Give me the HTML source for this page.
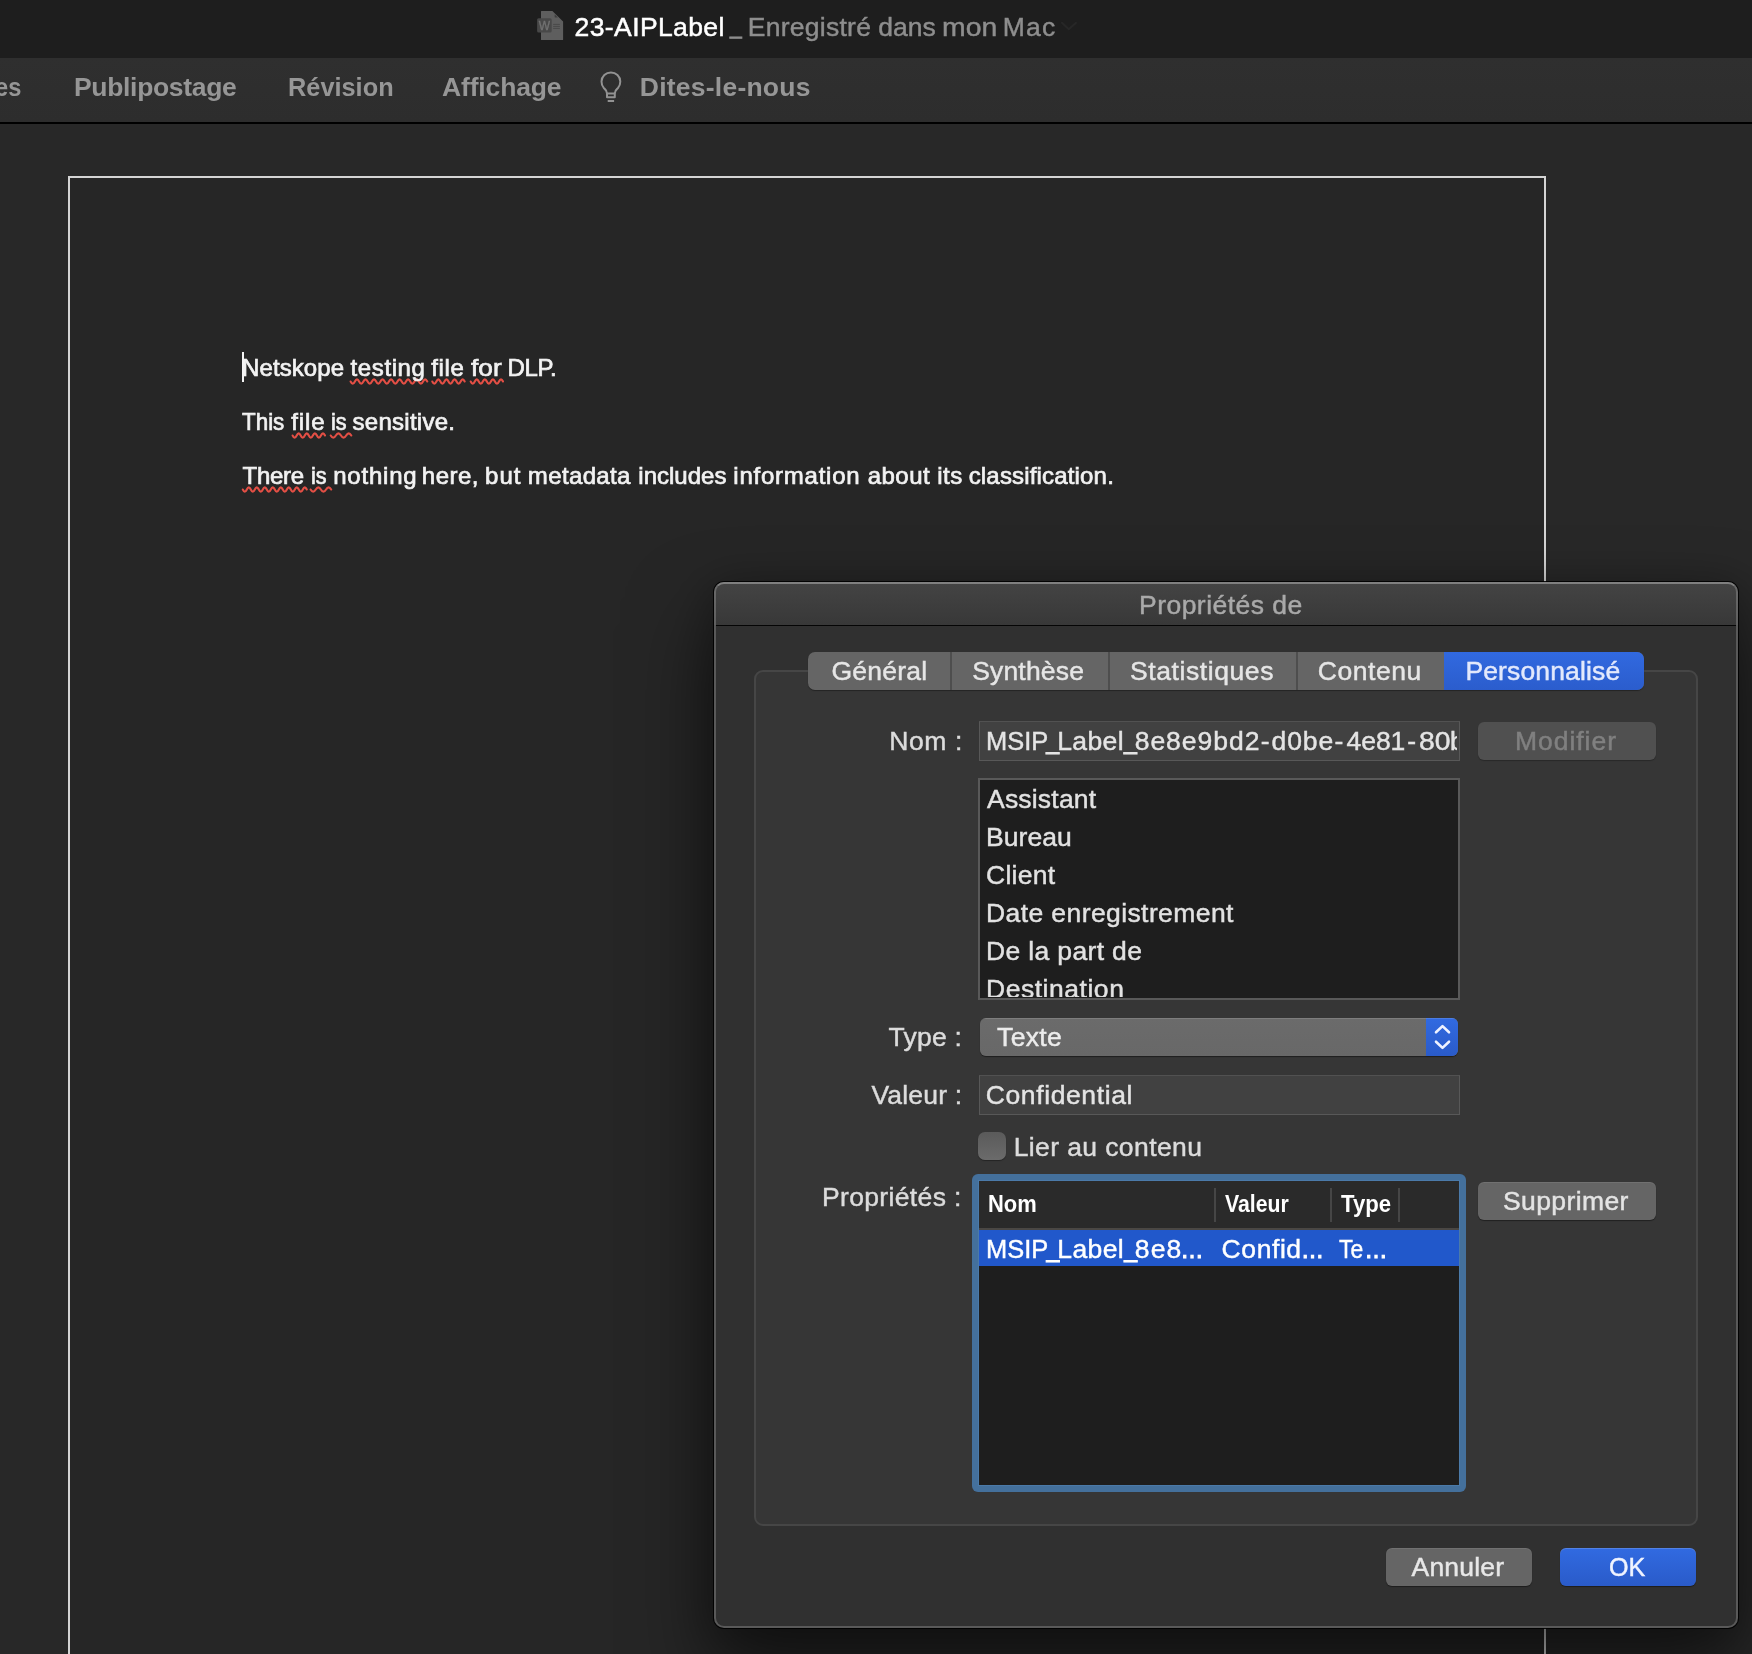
<!DOCTYPE html>
<html lang="fr">
<head>
<meta charset="utf-8">
<title>23-AIPLabel</title>
<style>
html,body{margin:0;padding:0}
body{width:1752px;height:1654px;overflow:hidden;position:relative;background:#282828;font-family:"Liberation Sans",sans-serif}
.abs,.t,div{position:absolute;box-sizing:border-box}
.t{white-space:pre;line-height:1}
#titlebar{left:0;top:0;width:1752px;height:58px;background:#1e1e1e}
#ribbon{left:0;top:58px;width:1752px;height:64px;background:linear-gradient(#2f2f2f,#2d2d2d)}
#ribbonline{left:0;top:122px;width:1752px;height:2px;background:#000}
#page{left:68px;top:176px;width:1478px;height:1500px;background:#262626;border:2px solid #d4d4d4}
#caret{left:242px;top:352px;width:2px;height:30px;background:#f4f4f4}
#dlg{left:714px;top:582px;width:1024px;height:1046px;border-radius:10px;background:#303030;
 box-shadow:0 0 0 1px rgba(0,0,0,.9),0 44px 80px 6px rgba(0,0,0,.5),0 4px 40px 4px rgba(0,0,0,.22)}
#dlgtitle{left:0;top:0;width:1024px;height:43px;border-radius:10px 10px 0 0;background:linear-gradient(#444444,#383838)}
#dlgline{left:2px;top:43px;width:1020px;height:1px;background:#050505}
#dlgedge{left:0;top:0;width:1024px;height:1046px;border-radius:10px;border:2px solid rgba(255,255,255,.2);border-top-color:rgba(255,255,255,.32)}
#group{left:754px;top:670px;width:944px;height:856px;border-radius:9px;background:#363636;border:2px solid #464646}
#tabs{left:808px;top:652px;width:836px;height:38px;border-radius:7px;background:#656565;overflow:hidden;box-shadow:0 1px 1px rgba(0,0,0,.35)}
.sep{top:0;width:2px;height:38px;background:#4e4e4e}
#tabsel{left:636px;top:0;width:200px;height:38px;background:linear-gradient(#3169e0,#2b5dcd)}
.field{background:#414141;border:1px solid #585858;border-top-color:#515151}
#nom{left:979px;top:721px;width:481px;height:40px}
#valeur{left:979px;top:1075px;width:481px;height:40px}
#list{left:978px;top:778px;width:482px;height:222px;background:#1e1e1e;border:2px solid #595959}
.btn{border-radius:6px;background:#656565;box-shadow:0 1px 1px rgba(0,0,0,.4),inset 0 1px 0 rgba(255,255,255,.08)}
#modifier{left:1478px;top:722px;width:178px;height:38px;background:#505050;box-shadow:0 1px 1px rgba(0,0,0,.25)}
#supprimer{left:1478px;top:1182px;width:178px;height:38px}
#annuler{left:1386px;top:1548px;width:146px;height:38px}
#ok{left:1560px;top:1548px;width:136px;height:38px;background:linear-gradient(#316ae1,#2a5bc9);box-shadow:0 1px 1px rgba(0,0,0,.4),inset 0 1px 0 rgba(255,255,255,.16)}
#popup{left:980px;top:1018px;width:478px;height:38px;border-radius:6px;background:linear-gradient(#6b6b6b,#686868);overflow:hidden;box-shadow:0 1px 1px rgba(0,0,0,.45)}
#pophl{left:0;top:0;width:478px;height:1px;background:rgba(255,255,255,.13)}
#popblue{left:446px;top:0;width:32px;height:38px;background:linear-gradient(#316ae1,#2a5bc9)}
#check{left:978px;top:1132px;width:28px;height:28px;border-radius:7px;background:linear-gradient(#5a5a5a,#6b6b6b);box-shadow:0 1px 1px rgba(0,0,0,.35)}
#focus{left:972px;top:1174px;width:494px;height:318px;border-radius:6px;background:#44709c}
#table{left:979px;top:1181px;width:480px;height:304px;background:#1e1e1e;box-shadow:0 0 0 1px rgba(90,140,195,.35)}
#thead{left:0;top:0;width:480px;height:47px;background:#2a2a2a}
#theadline{left:0;top:47px;width:480px;height:2px;background:#4a4744}
.hsep{top:7px;width:2px;height:34px;background:#464646}
#rowsel{left:0;top:49px;width:480px;height:36px;background:#2158cb}
#txt{left:0;top:0;width:1752px;height:1654px;will-change:transform}
#clipnom{will-change:transform;left:0;top:0;width:1752px;height:1654px;clip-path:inset(722px 295.5px 894px 980px)}
#cliplist{will-change:transform;left:0;top:0;width:1752px;height:1654px;clip-path:inset(780px 294px 657px 980px)}
</style>
</head>
<body>
<div id="titlebar"></div>
<div id="ribbon"></div>
<div id="ribbonline"></div>
<!-- document icon -->
<svg class="abs" style="left:536px;top:10px;will-change:transform" width="28" height="31" viewBox="0 0 28 31">
 <path d="M5.500 0.900h10.900l10.700 10.700v17.800a0.500 0.500 0 0 1-0.500 0.500h-21.100a0.500 0.500 0 0 1-0.500-0.500v-28a0.500 0.500 0 0 1 0.500-0.500z" fill="#5e5e5e"/>
 <path d="M18.700 4.300l3.200 3.200h-2.600a0.600 0.600 0 0 1-0.600-0.600z" fill="#3e3e3e"/>
 <rect x="1.100" y="8.200" width="14.600" height="14.400" rx="1.600" fill="#484848"/>
 <path d="M17.100 14.400h6.800M17.100 16.400h6.800M17.100 18.400h6.800" stroke="#494949" stroke-width="1"/>
 <text x="8.400" y="19.800" font-family="Liberation Sans,sans-serif" font-size="12" font-weight="400" fill="#727272" stroke="#727272" stroke-width="0.300" text-anchor="middle">W</text>
</svg>
<!-- title chevron -->
<svg class="abs" style="left:1060px;top:21px" width="18" height="10" viewBox="0 0 18 10" fill="none" stroke="#272727" stroke-width="2" stroke-linecap="round" stroke-linejoin="round"><path d="M2 1.800l6.800 6.400l7.200-6.400"/></svg>
<!-- bulb -->
<svg class="abs" style="left:598px;top:70px" width="26" height="34" viewBox="0 0 26 34" fill="none" stroke="#929292" stroke-width="2" stroke-linejoin="round">
 <path d="M9 23.500c0-3-1.300-3.800-3-5.300a9.400 9.400 0 1 1 13.800 0c-1.700 1.500-3 2.300-3 5.300"/>
 <rect x="9" y="23.500" width="7.800" height="3.800"/>
 <path d="M9.700 31h6.400"/>
</svg>
<div id="page"></div>
<div id="caret"></div>
<svg class="abs" style="left:0;top:0" width="1752" height="600" fill="none" stroke="#e34f45" stroke-width="2.1" stroke-linecap="round"><path d="M350.6 381.5 q2.13 4.32 4.26 0 t4.26 0 q2.13 4.32 4.26 0 t4.26 0 q2.13 4.32 4.26 0 t4.26 0 q2.13 4.32 4.26 0 t4.26 0 q2.13 4.32 4.26 0 t4.26 0 q2.13 4.32 4.26 0 t4.26 0 q2.13 4.32 4.26 0 t4.26 0 q2.13 4.32 4.26 0 t4.26 0 q2.13 4.32 4.26 0 t4.26 0"/><path d="M432.3 381.5 q2.02 4.32 4.05 0 t4.05 0 q2.02 4.32 4.05 0 t4.05 0 q2.02 4.32 4.05 0 t4.05 0 q2.02 4.32 4.05 0 t4.05 0"/><path d="M470.7 381.5 q2.02 4.32 4.04 0 t4.04 0 q2.02 4.32 4.04 0 t4.04 0 q2.02 4.32 4.04 0 t4.04 0 q2.02 4.32 4.04 0 t4.04 0"/><path d="M292.6 435.5 q2.02 4.32 4.05 0 t4.05 0 q2.02 4.32 4.05 0 t4.05 0 q2.02 4.32 4.05 0 t4.05 0 q2.02 4.32 4.05 0 t4.05 0"/><path d="M330.7 435.5 q2.58 4.32 5.15 0 t5.15 0 q2.58 4.32 5.15 0 t5.15 0"/><path d="M242.8 489.5 q2.00 4.32 4.00 0 t4.00 0 q2.00 4.32 4.00 0 t4.00 0 q2.00 4.32 4.00 0 t4.00 0 q2.00 4.32 4.00 0 t4.00 0 q2.00 4.32 4.00 0 t4.00 0 q2.00 4.32 4.00 0 t4.00 0 q2.00 4.32 4.00 0 t4.00 0 q2.00 4.32 4.00 0 t4.00 0"/><path d="M310.6 489.5 q2.57 4.32 5.15 0 t5.15 0 q2.57 4.32 5.15 0 t5.15 0"/></svg>
<div id="dlg">
 <div id="dlgtitle"></div>
 <div id="dlgline"></div>
 <div id="dlgedge"></div>
</div>
<div id="group"></div>
<div id="tabs">
 <div class="sep" style="left:142px"></div>
 <div class="sep" style="left:300px"></div>
 <div class="sep" style="left:488px"></div>
 <div id="tabsel"></div>
</div>
<div id="nom" class="field"></div>
<div id="list"></div>
<div id="modifier" class="btn"></div>
<div id="popup"><div id="popblue"></div><div id="pophl"></div>
 <svg class="abs" style="left:446px;top:0" width="32" height="38" viewBox="0 0 32 38" fill="none" stroke="#eef2ff" stroke-width="2.600" stroke-linecap="round" stroke-linejoin="round"><path d="M10 14.300l6.500-6.200l6.500 6.200M10 23.700l6.500 6.200l6.500-6.200"/></svg>
</div>
<div id="valeur" class="field"></div>
<div id="check"></div>
<div id="focus"></div>
<div id="table">
 <div id="thead"></div>
 <div id="theadline"></div>
 <div class="hsep" style="left:235px"></div>
 <div class="hsep" style="left:351px"></div>
 <div class="hsep" style="left:419px"></div>
 <div id="rowsel"></div>
</div>
<div id="supprimer" class="btn"></div>
<div id="annuler" class="btn"></div>
<div id="ok" class="btn"></div>
<div id="clipnom">
<span class="t" style="left:985.58px;top:728.00px;font-size:26.5px;color:#e4e4e4;letter-spacing:0.000px;-webkit-text-stroke:0.45px #e4e4e4;transform:scaleX(0.9597);transform-origin:0 0">MSIP</span><span class="t" style="left:1046.30px;top:730.00px;font-size:23px;color:#e4e4e4;letter-spacing:0.000px;-webkit-text-stroke:0.9px #e4e4e4">_</span><span class="t" style="left:1057.20px;top:728.00px;font-size:26.5px;color:#e4e4e4;letter-spacing:0.375px;-webkit-text-stroke:0.45px #e4e4e4">Label</span><span class="t" style="left:1124.10px;top:730.00px;font-size:23px;color:#e4e4e4;letter-spacing:0.000px;-webkit-text-stroke:0.9px #e4e4e4">_</span><span class="t" style="left:1134.70px;top:728.00px;font-size:26.5px;color:#e4e4e4;letter-spacing:0.971px;-webkit-text-stroke:0.45px #e4e4e4">8e8e9bd2</span><span class="t" style="left:1260.80px;top:728.00px;font-size:26.5px;color:#e4e4e4;letter-spacing:0.000px;-webkit-text-stroke:0.45px #e4e4e4">-</span><span class="t" style="left:1271.50px;top:728.00px;font-size:26.5px;color:#e4e4e4;letter-spacing:0.933px;-webkit-text-stroke:0.45px #e4e4e4">d0be</span><span class="t" style="left:1334.60px;top:728.00px;font-size:26.5px;color:#e4e4e4;letter-spacing:0.000px;-webkit-text-stroke:0.45px #e4e4e4">-</span><span class="t" style="left:1346.60px;top:728.00px;font-size:26.5px;color:#e4e4e4;letter-spacing:-0.067px;-webkit-text-stroke:0.45px #e4e4e4">4e81</span><span class="t" style="left:1407.30px;top:728.00px;font-size:26.5px;color:#e4e4e4;letter-spacing:0.000px;-webkit-text-stroke:0.45px #e4e4e4">-</span><span class="t" style="left:1418.53px;top:728.00px;font-size:26.5px;color:#e4e4e4;letter-spacing:0.000px;-webkit-text-stroke:0.45px #e4e4e4;transform:scaleX(1.0679);transform-origin:0 0">80</span><span class="t" style="left:1450.00px;top:728.00px;font-size:26.5px;color:#e4e4e4;letter-spacing:0.000px;-webkit-text-stroke:0.45px #e4e4e4">b</span>
</div>
<div id="cliplist">
<span class="t" style="left:987.00px;top:786.00px;font-size:26.5px;color:#e2e2e2;letter-spacing:0.200px;-webkit-text-stroke:0.45px #e2e2e2">Assistant</span>
<span class="t" style="left:986.00px;top:824.00px;font-size:26.5px;color:#e2e2e2;letter-spacing:0.060px;-webkit-text-stroke:0.45px #e2e2e2">Bureau</span>
<span class="t" style="left:986.00px;top:862.00px;font-size:26.5px;color:#e2e2e2;letter-spacing:0.280px;-webkit-text-stroke:0.45px #e2e2e2">Client</span>
<span class="t" style="left:986.00px;top:900.00px;font-size:26.5px;color:#e2e2e2;letter-spacing:0.406px;-webkit-text-stroke:0.45px #e2e2e2">Date enregistrement</span>
<span class="t" style="left:986.00px;top:938.00px;font-size:26.5px;color:#e2e2e2;letter-spacing:0.350px;-webkit-text-stroke:0.45px #e2e2e2">De la part de</span>
<span class="t" style="left:986.00px;top:976.00px;font-size:26.5px;color:#e2e2e2;letter-spacing:0.530px;-webkit-text-stroke:0.45px #e2e2e2">Destination</span>

</div>
<div id="txt">
<span class="t" style="left:574.60px;top:14.00px;font-size:26.5px;color:#ffffff;letter-spacing:0.390px;-webkit-text-stroke:0.5px #ffffff">23-AIPLabel</span> <span class="t" style="left:730.00px;top:16.00px;font-size:21px;color:#8e8e8e;letter-spacing:0.000px;-webkit-text-stroke:0.8px #8e8e8e">_</span> <span class="t" style="left:747.80px;top:14.00px;font-size:26.5px;color:#8e8e8e;letter-spacing:0.256px;-webkit-text-stroke:0.45px #8e8e8e">Enregistré</span> <span class="t" style="left:878.20px;top:14.00px;font-size:26.5px;color:#8e8e8e;letter-spacing:0.000px;-webkit-text-stroke:0.45px #8e8e8e">dans</span> <span class="t" style="left:942.16px;top:14.00px;font-size:26.5px;color:#8e8e8e;letter-spacing:0.000px;-webkit-text-stroke:0.45px #8e8e8e;transform:scaleX(1.0708);transform-origin:0 0">mon</span> <span class="t" style="left:1002.80px;top:14.00px;font-size:26.5px;color:#8e8e8e;letter-spacing:1.250px;-webkit-text-stroke:0.45px #8e8e8e">Mac</span>
<span class="t" style="left:-4.89px;top:74.00px;font-size:26.5px;color:#969696;letter-spacing:0.000px;font-weight:700;transform:scaleX(0.8929);transform-origin:0 0">es</span>
<span class="t" style="left:74.00px;top:74.00px;font-size:26.5px;color:#969696;letter-spacing:-0.327px;font-weight:700">Publipostage</span>
<span class="t" style="left:288.09px;top:74.00px;font-size:26.5px;color:#969696;letter-spacing:0.000px;font-weight:700;transform:scaleX(0.9561);transform-origin:0 0">Révision</span>
<span class="t" style="left:442.00px;top:74.00px;font-size:26.5px;color:#969696;letter-spacing:-0.150px;font-weight:700">Affichage</span>
<span class="t" style="left:639.80px;top:74.00px;font-size:26.5px;color:#969696;letter-spacing:0.233px;font-weight:700">Dites-le-nous</span>
<span class="t" style="left:242.00px;top:356.00px;font-size:24px;color:#f2f2f2;letter-spacing:0.100px;-webkit-text-stroke:0.7px #f2f2f2">Netskope</span> <span class="t" style="left:350.60px;top:356.00px;font-size:24px;color:#f2f2f2;letter-spacing:0.600px;-webkit-text-stroke:0.7px #f2f2f2">testing</span> <span class="t" style="left:431.20px;top:356.00px;font-size:24px;color:#f2f2f2;letter-spacing:0.667px;-webkit-text-stroke:0.7px #f2f2f2">file</span> <span class="t" style="left:470.70px;top:356.00px;font-size:24px;color:#f2f2f2;letter-spacing:0.000px;-webkit-text-stroke:0.7px #f2f2f2;transform:scaleX(1.0929);transform-origin:0 0">for</span> <span class="t" style="left:507.50px;top:356.00px;font-size:24px;color:#f2f2f2;letter-spacing:-0.333px;-webkit-text-stroke:0.7px #f2f2f2">DLP.</span>
<span class="t" style="left:242.40px;top:410.00px;font-size:24px;color:#f2f2f2;letter-spacing:0.000px;-webkit-text-stroke:0.7px #f2f2f2;transform:scaleX(0.9333);transform-origin:0 0">This</span> <span class="t" style="left:291.20px;top:410.00px;font-size:24px;color:#f2f2f2;letter-spacing:0.900px;-webkit-text-stroke:0.7px #f2f2f2">file</span> <span class="t" style="left:331.00px;top:410.00px;font-size:24px;color:#f2f2f2;letter-spacing:0.000px;-webkit-text-stroke:0.7px #f2f2f2;transform:scaleX(0.9000);transform-origin:0 0">is</span> <span class="t" style="left:352.60px;top:410.00px;font-size:24px;color:#f2f2f2;letter-spacing:0.256px;-webkit-text-stroke:0.7px #f2f2f2">sensitive.</span>
<span class="t" style="left:242.60px;top:464.00px;font-size:24px;color:#f2f2f2;letter-spacing:-0.275px;-webkit-text-stroke:0.7px #f2f2f2">There</span> <span class="t" style="left:310.50px;top:464.00px;font-size:24px;color:#f2f2f2;letter-spacing:0.000px;-webkit-text-stroke:0.7px #f2f2f2;transform:scaleX(0.9000);transform-origin:0 0">is</span> <span class="t" style="left:333.20px;top:464.00px;font-size:24px;color:#f2f2f2;letter-spacing:0.783px;-webkit-text-stroke:0.7px #f2f2f2">nothing</span> <span class="t" style="left:421.80px;top:464.00px;font-size:24px;color:#f2f2f2;letter-spacing:0.500px;-webkit-text-stroke:0.7px #f2f2f2">here,</span> <span class="t" style="left:485.00px;top:464.00px;font-size:24px;color:#f2f2f2;letter-spacing:1.050px;-webkit-text-stroke:0.7px #f2f2f2">but</span> <span class="t" style="left:527.80px;top:464.00px;font-size:24px;color:#f2f2f2;letter-spacing:0.371px;-webkit-text-stroke:0.7px #f2f2f2">metadata</span> <span class="t" style="left:638.30px;top:464.00px;font-size:24px;color:#f2f2f2;letter-spacing:0.014px;-webkit-text-stroke:0.7px #f2f2f2">includes</span> <span class="t" style="left:733.30px;top:464.00px;font-size:24px;color:#f2f2f2;letter-spacing:0.760px;-webkit-text-stroke:0.7px #f2f2f2">information</span> <span class="t" style="left:867.70px;top:464.00px;font-size:24px;color:#f2f2f2;letter-spacing:0.475px;-webkit-text-stroke:0.7px #f2f2f2">about</span> <span class="t" style="left:937.20px;top:464.00px;font-size:24px;color:#f2f2f2;letter-spacing:0.550px;-webkit-text-stroke:0.7px #f2f2f2">its</span> <span class="t" style="left:968.70px;top:464.00px;font-size:24px;color:#f2f2f2;letter-spacing:0.171px;-webkit-text-stroke:0.7px #f2f2f2">classification.</span>
<span class="t" style="left:1139.00px;top:592.00px;font-size:26.5px;color:#a9a9a9;letter-spacing:0.467px;-webkit-text-stroke:0.45px #a9a9a9">Propriétés de</span>
<span class="t" style="left:831.50px;top:658.00px;font-size:26.5px;color:#e6e6e6;letter-spacing:0.217px;-webkit-text-stroke:0.45px #e6e6e6">Général</span>
<span class="t" style="left:972.20px;top:658.00px;font-size:26.5px;color:#e6e6e6;letter-spacing:0.171px;-webkit-text-stroke:0.45px #e6e6e6">Synthèse</span>
<span class="t" style="left:1130.00px;top:658.00px;font-size:26.5px;color:#e6e6e6;letter-spacing:0.582px;-webkit-text-stroke:0.45px #e6e6e6">Statistiques</span>
<span class="t" style="left:1317.80px;top:658.00px;font-size:26.5px;color:#e6e6e6;letter-spacing:0.533px;-webkit-text-stroke:0.45px #e6e6e6">Contenu</span>
<span class="t" style="left:1465.40px;top:658.00px;font-size:26.5px;color:#e3e9fc;letter-spacing:0.145px;-webkit-text-stroke:0.45px #e3e9fc">Personnalisé</span>
<span class="t" style="left:889.20px;top:728.00px;font-size:26.5px;color:#dcdcdc;letter-spacing:0.600px;-webkit-text-stroke:0.45px #dcdcdc">Nom :</span>
<span class="t" style="left:888.60px;top:1024.00px;font-size:26.5px;color:#dcdcdc;letter-spacing:0.220px;-webkit-text-stroke:0.45px #dcdcdc">Type :</span>
<span class="t" style="left:871.40px;top:1082.00px;font-size:26.5px;color:#dcdcdc;letter-spacing:0.186px;-webkit-text-stroke:0.45px #dcdcdc">Valeur :</span>
<span class="t" style="left:822.00px;top:1184.00px;font-size:26.5px;color:#dcdcdc;letter-spacing:0.345px;-webkit-text-stroke:0.45px #dcdcdc">Propriétés :</span>
<span class="t" style="left:1515.00px;top:728.00px;font-size:26.5px;color:#808080;letter-spacing:0.957px;-webkit-text-stroke:0.45px #808080">Modifier</span>
<span class="t" style="left:997.00px;top:1024.00px;font-size:26.5px;color:#ececec;letter-spacing:0.375px;-webkit-text-stroke:0.45px #ececec">Texte</span>
<span class="t" style="left:985.70px;top:1082.00px;font-size:26.5px;color:#e4e4e4;letter-spacing:0.618px;-webkit-text-stroke:0.45px #e4e4e4">Confidential</span>
<span class="t" style="left:1013.70px;top:1134.00px;font-size:26.5px;color:#dcdcdc;letter-spacing:0.393px;-webkit-text-stroke:0.45px #dcdcdc">Lier au contenu</span>
<span class="t" style="left:988.35px;top:1193.00px;font-size:23px;color:#ffffff;letter-spacing:0.000px;font-weight:700;transform:scaleX(0.9531);transform-origin:0 0">Nom</span>
<span class="t" style="left:1224.90px;top:1193.00px;font-size:23px;color:#ffffff;letter-spacing:0.000px;font-weight:700;transform:scaleX(0.9232);transform-origin:0 0">Valeur</span>
<span class="t" style="left:1340.90px;top:1193.00px;font-size:23px;color:#ffffff;letter-spacing:0.000px;font-weight:700;transform:scaleX(0.9627);transform-origin:0 0">Type</span>
<span class="t" style="left:985.58px;top:1236.00px;font-size:26.5px;color:#ffffff;letter-spacing:0.000px;-webkit-text-stroke:0.45px #ffffff;transform:scaleX(0.9597);transform-origin:0 0">MSIP</span><span class="t" style="left:1046.40px;top:1238.00px;font-size:23px;color:#ffffff;letter-spacing:0.000px;-webkit-text-stroke:0.9px #ffffff">_</span><span class="t" style="left:1057.30px;top:1236.00px;font-size:26.5px;color:#ffffff;letter-spacing:0.375px;-webkit-text-stroke:0.45px #ffffff">Label</span><span class="t" style="left:1124.20px;top:1238.00px;font-size:23px;color:#ffffff;letter-spacing:0.000px;-webkit-text-stroke:0.9px #ffffff">_</span><span class="t" style="left:1134.80px;top:1236.00px;font-size:26.5px;color:#ffffff;letter-spacing:1.100px;-webkit-text-stroke:0.45px #ffffff">8e8</span><span class="t" style="left:1180.40px;top:1239.00px;font-size:23px;color:#ffffff;letter-spacing:0.000px;-webkit-text-stroke:1.1px #ffffff">…</span>
<span class="t" style="left:1221.60px;top:1236.00px;font-size:26.5px;color:#ffffff;letter-spacing:0.580px;-webkit-text-stroke:0.45px #ffffff">Confid</span><span class="t" style="left:1301.00px;top:1239.00px;font-size:23px;color:#ffffff;letter-spacing:0.000px;-webkit-text-stroke:1.1px #ffffff">…</span>
<span class="t" style="left:1339.00px;top:1236.00px;font-size:26.5px;color:#ffffff;letter-spacing:0.000px;-webkit-text-stroke:0.45px #ffffff;transform:scaleX(0.8630);transform-origin:0 0">Te</span><span class="t" style="left:1364.40px;top:1239.00px;font-size:23px;color:#ffffff;letter-spacing:0.000px;-webkit-text-stroke:1.1px #ffffff">…</span>
<span class="t" style="left:1503.00px;top:1188.00px;font-size:26.5px;color:#e4e4e4;letter-spacing:0.400px;-webkit-text-stroke:0.45px #e4e4e4">Supprimer</span>
<span class="t" style="left:1411.60px;top:1554.00px;font-size:26.5px;color:#e8e8e8;letter-spacing:0.183px;-webkit-text-stroke:0.45px #e8e8e8">Annuler</span>
<span class="t" style="left:1609.45px;top:1554.00px;font-size:26.5px;color:#f0f4ff;letter-spacing:0.000px;-webkit-text-stroke:0.45px #f0f4ff;transform:scaleX(0.9459);transform-origin:0 0">OK</span>

</div>
</body>
</html>
